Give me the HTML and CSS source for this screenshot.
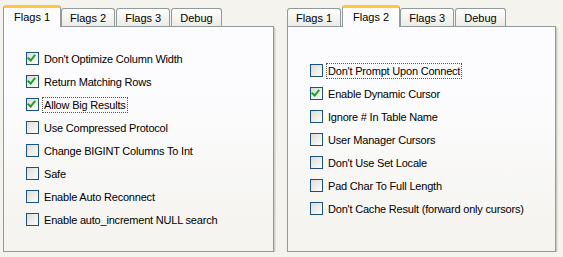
FILE: index.html
```html
<!DOCTYPE html>
<html>
<head>
    <title>Connection Flags</title>
    <link rel="stylesheet" href="styles.css">
</head>
<body>
    <div class="dialogs">
        <div class="tabbox">
            <div class="tabs">
                <div class="tab active">Flags 1</div>
                <div class="tab">Flags 2</div>
                <div class="tab">Flags 3</div>
                <div class="tab">Debug</div>
            </div>
            <div class="page first">
                <label class="opt"><span class="box on"></span><span class="txt">Don't Optimize Column Width</span></label>
                <label class="opt"><span class="box on"></span><span class="txt">Return Matching Rows</span></label>
                <label class="opt"><span class="box on"></span><span class="txt focus">Allow Big Results</span></label>
                <label class="opt"><span class="box"></span><span class="txt">Use Compressed Protocol</span></label>
                <label class="opt"><span class="box"></span><span class="txt">Change BIGINT Columns To Int</span></label>
                <label class="opt"><span class="box"></span><span class="txt">Safe</span></label>
                <label class="opt"><span class="box"></span><span class="txt">Enable Auto Reconnect</span></label>
                <label class="opt"><span class="box"></span><span class="txt">Enable auto_increment NULL search</span></label>
            </div>
        </div>

        <div class="tabbox second">
            <div class="tabs">
                <div class="tab">Flags 1</div>
                <div class="tab active">Flags 2</div>
                <div class="tab">Flags 3</div>
                <div class="tab">Debug</div>
            </div>
            <div class="page">
                <label class="opt"><span class="box"></span><span class="txt focus">Don't Prompt Upon Connect</span></label>
                <label class="opt"><span class="box on"></span><span class="txt">Enable Dynamic Cursor</span></label>
                <label class="opt"><span class="box"></span><span class="txt">Ignore # In Table Name</span></label>
                <label class="opt"><span class="box"></span><span class="txt">User Manager Cursors</span></label>
                <label class="opt"><span class="box"></span><span class="txt">Don't Use Set Locale</span></label>
                <label class="opt"><span class="box"></span><span class="txt">Pad Char To Full Length</span></label>
                <label class="opt"><span class="box"></span><span class="txt">Don't Cache Result (forward only cursors)</span></label>
            </div>
        </div>
    </div>
</body>
</html>
```

FILE: styles.css
```css
body {
    background-color: #f4f3ee;
    font-family: "Liberation Sans", Arial, sans-serif;
    font-size: 11px;
    color: #000;
    margin: 0;
    padding: 5px 0 0 3px;
}

.dialogs {
    display: flex;
    gap: 13px;
}

.tabbox {
    width: 271px;
}

.second {
    width: 269px;
}

.tabs {
    display: flex;
    align-items: flex-end;
    height: 21px;
    position: relative;
    z-index: 1;
}

.tab {
    height: 18px;
    padding: 0 8px;
    margin-right: 1px;
    border: 1px solid #919b9c;
    border-bottom: none;
    border-radius: 3px 3px 0 0;
    background: linear-gradient(#fefefe, #ecebe6);
    line-height: 18px;
    box-sizing: border-box;
}

.tab.active {
    height: 22px;
    padding: 0 10px;
    margin: 0 0 -1px 0;
    background: #fcfcfe;
    border-top: 3px solid #ffc83c;
    line-height: 19px;
}

.page {
    height: 226px;
    box-sizing: border-box;
    border: 1px solid #919b9c;
    background: linear-gradient(#fcfcfe 30%, #f4f3ee);
    box-shadow: 1px 1px 0 #d0cec4, 2px 2px 0 #e3e1d8;
    padding: 32px 0 0 22px;
}

.page.first {
    padding-top: 20px;
}

.opt {
    display: flex;
    align-items: center;
    height: 23px;
    letter-spacing: -0.2px;
}

.box {
    width: 13px;
    height: 13px;
    box-sizing: border-box;
    border: 1px solid #1c5180;
    background: linear-gradient(135deg, #dcdcd7, #fdfdfc);
    margin-right: 3px;
    position: relative;
}

.box.on::after {
    content: "";
    position: absolute;
    left: 2px;
    top: 0px;
    width: 3px;
    height: 6px;
    border: solid #21a121;
    border-width: 0 2px 2px 0;
    transform: rotate(40deg);
}

.txt {
    padding: 1px 1px;
    border: 1px dotted transparent;
}

.txt.focus {
    border-color: #555;
}
```
